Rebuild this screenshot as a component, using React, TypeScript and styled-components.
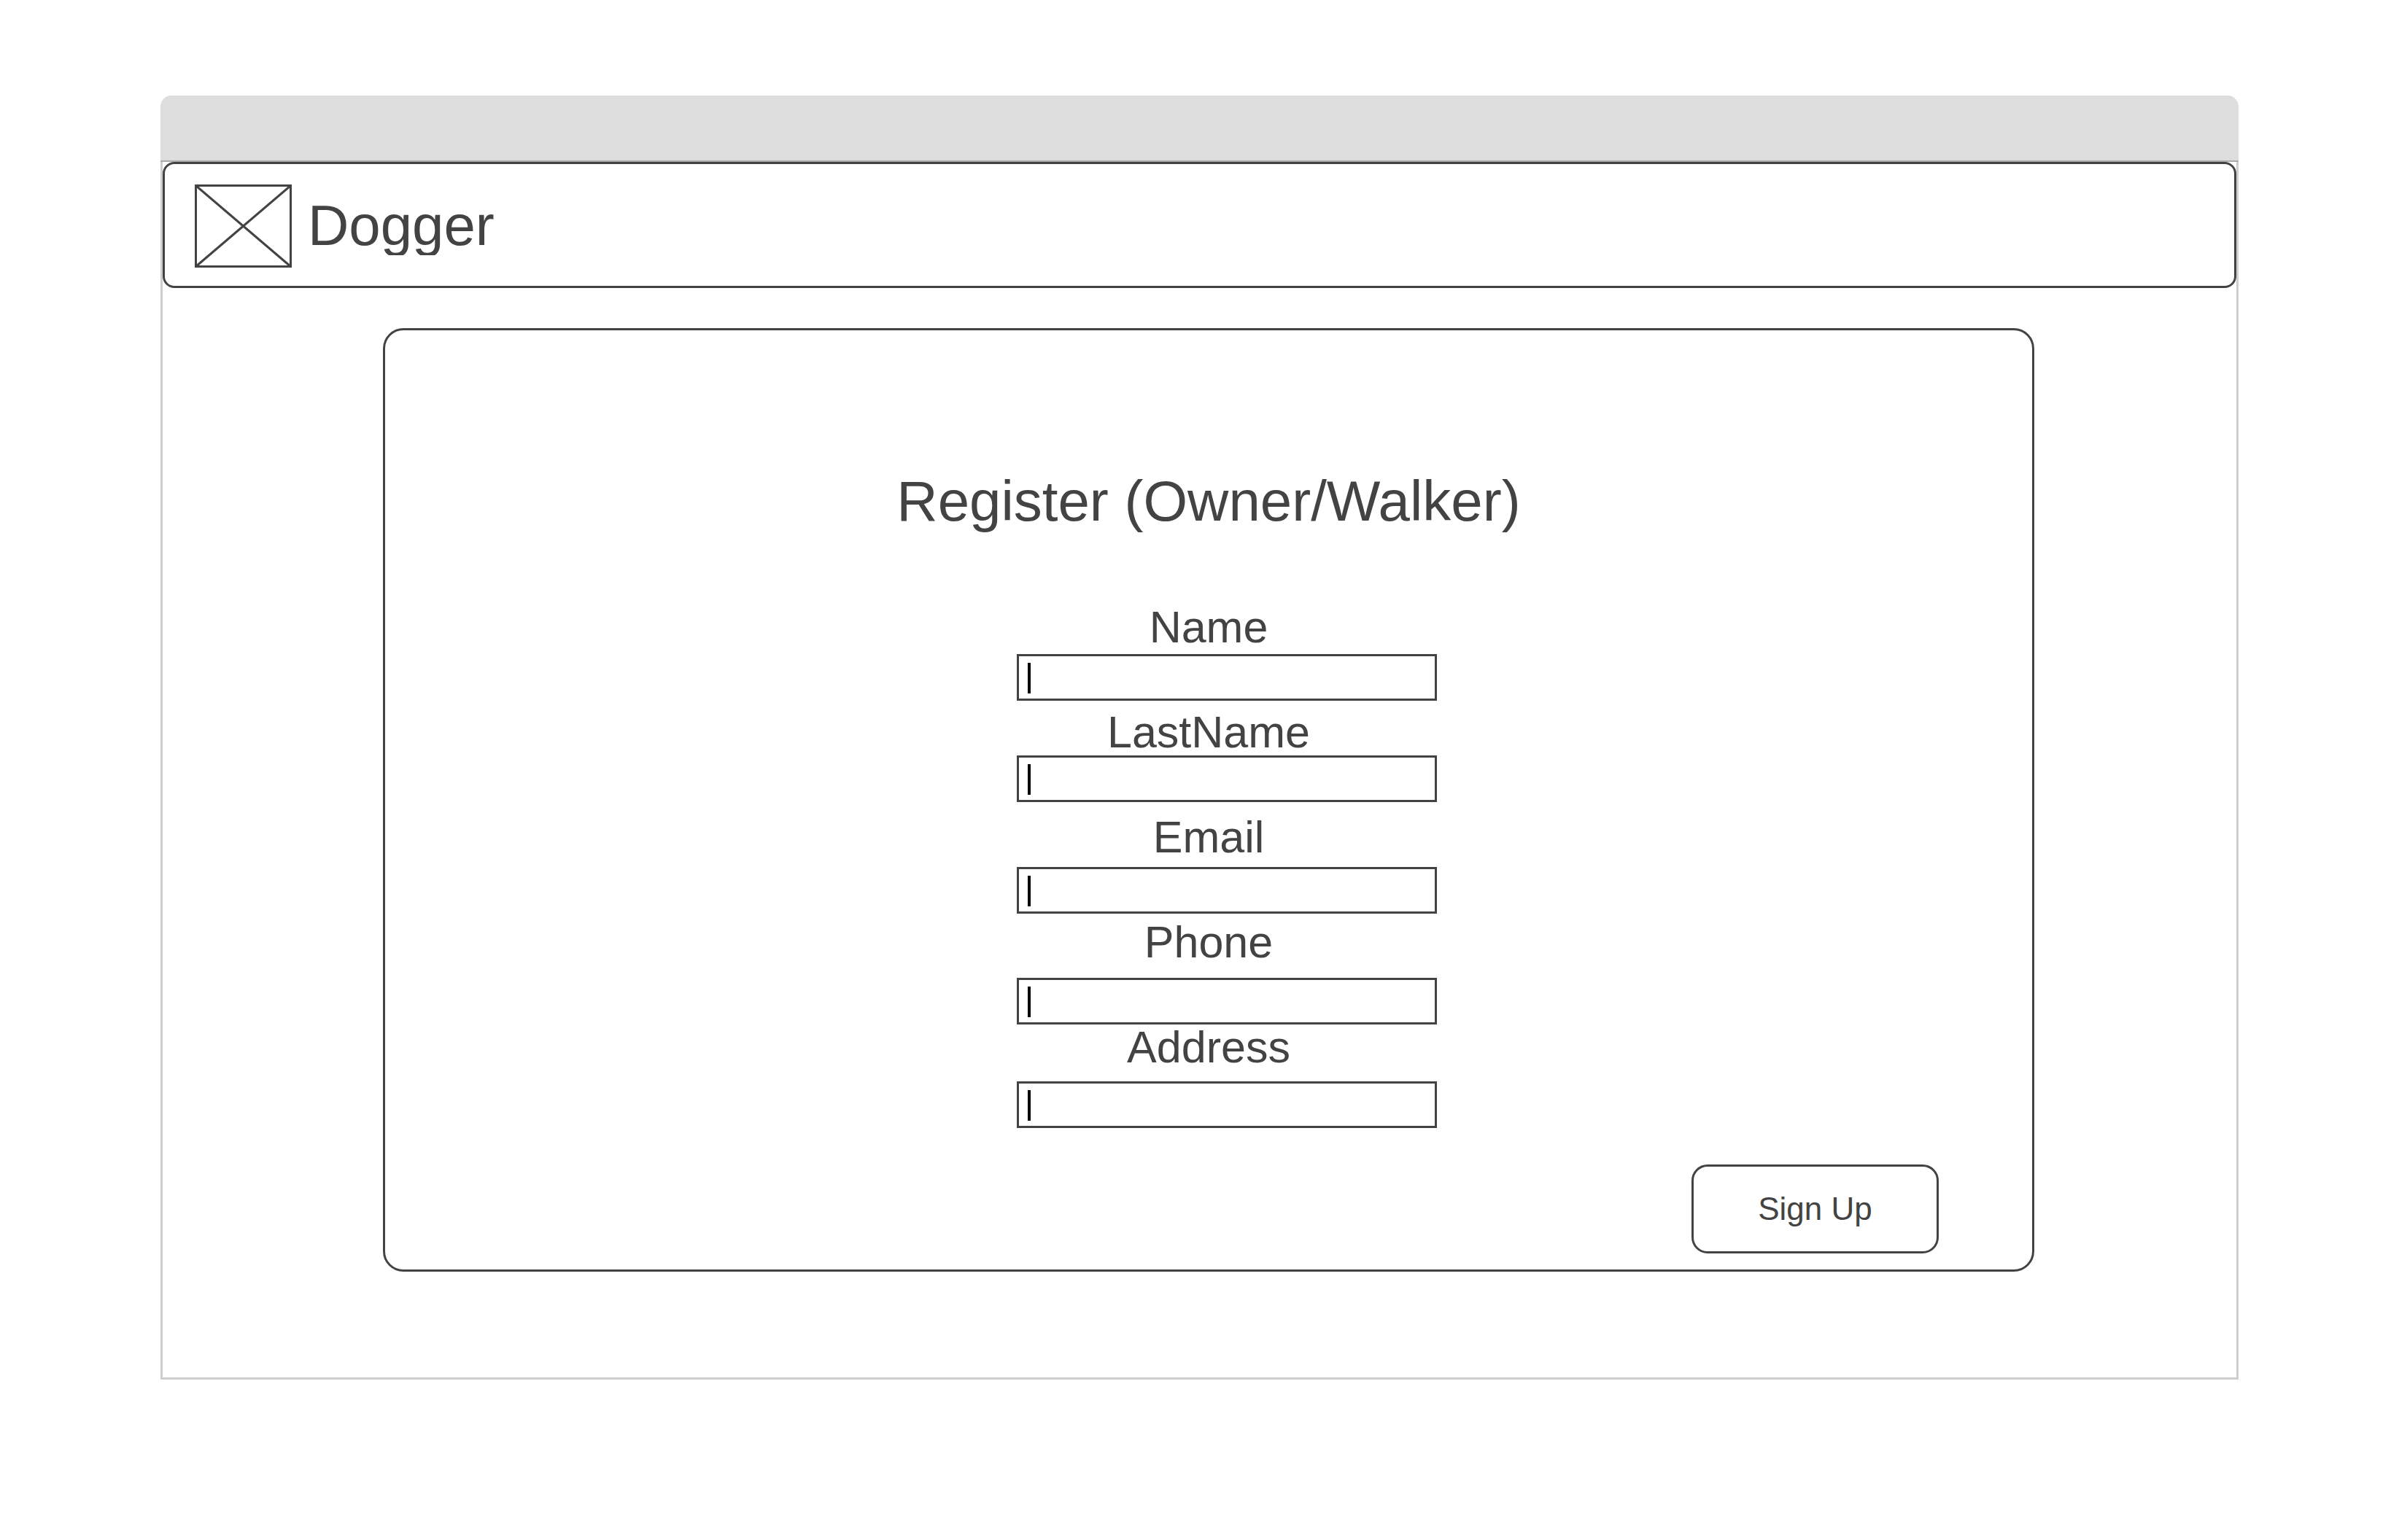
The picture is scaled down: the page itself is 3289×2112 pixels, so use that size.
import React from 'react';
import styled, { createGlobalStyle } from 'styled-components';

const ink = '#434343';

const GlobalStyle = createGlobalStyle`
  *, *::before, *::after {
    box-sizing: border-box;
  }
  body {
    margin: 0;
    background: #fff;
    color: ${ink};
    font-family: 'Liberation Sans', Arial, sans-serif;
  }
`;

const Page = styled.div`
  padding: 131px 220px 220px;
`;

const TitleBar = styled.div`
  height: 91px;
  background: #ddd;
  border-bottom: 2px solid #aaa;
  border-radius: 15px 15px 0 0;
`;

const WindowBody = styled.div`
  display: flex;
  flex-direction: column;
  gap: 55px;
  padding-bottom: 145px;
  border: 3px solid #cecece;
  border-top: none;
`;

const Header = styled.header`
  display: flex;
  align-items: center;
  gap: 22px;
  padding: 28px 41px 25px;
  border: 3px solid ${ink};
  border-radius: 16px;
`;

const Logo = styled.svg`
  flex: none;
  width: 133px;
  height: 114px;
  fill: none;
  stroke: ${ink};
  stroke-width: 3;
`;

const Brand = styled.div`
  height: 80px;
  font-size: 78px;
  line-height: 78px;
  overflow: hidden;
`;

const Panel = styled.main`
  margin: 0 277px 0 302px;
  padding: 189px 128px 22px;
  border: 3px solid ${ink};
  border-radius: 28px;
`;

const Form = styled.form`
  display: flex;
  flex-direction: column;
  align-items: center;
`;

const Title = styled.h1`
  margin: 0 0 97px;
  font-size: 78px;
  font-weight: 400;
  line-height: 90px;
`;

const Fields = styled.div`
  display: grid;
  grid-template-columns: minmax(0, 1fr);
  grid-auto-rows: 144px;
  width: 100%;
  max-width: 626px;
`;

const Field = styled.div<{ $gap: number }>`
  display: flex;
  flex-direction: column;
  gap: ${({ $gap }) => $gap}px;
`;

const Label = styled.label`
  font-size: 61px;
  line-height: 62px;
  text-align: center;
`;

const TextInput = styled.input`
  flex: none;
  min-width: 0;
  height: 64px;
  margin-left: 50px;
  padding: 0 24px;
  border: 3px solid ${ink};
  border-radius: 0;
  outline: none;
  background: linear-gradient(#000, #000) 12px 9px / 4px 42px no-repeat;
  color: ${ink};
  font: inherit;
  font-size: 44px;
`;

const SubmitButton = styled.button`
  align-self: flex-end;
  width: 339px;
  height: 122px;
  margin-top: 48px;
  padding: 0;
  border: 3px solid ${ink};
  border-radius: 22px;
  background: transparent;
  color: ${ink};
  font: inherit;
  font-size: 44px;
  cursor: pointer;
`;

const fields = [
  { id: 'name', label: 'Name', type: 'text', gap: 6 },
  { id: 'last-name', label: 'LastName', type: 'text', gap: 1 },
  { id: 'email', label: 'Email', type: 'email', gap: 10 },
  { id: 'phone', label: 'Phone', type: 'tel', gap: 18 },
  { id: 'address', label: 'Address', type: 'text', gap: 16 },
];

export default function App() {
  return (
    <>
      <GlobalStyle />
      <Page>
        <TitleBar />
        <WindowBody>
          <Header>
            <Logo viewBox="0 0 133 114" aria-hidden="true">
              <rect x="1.5" y="1.5" width="130" height="111" />
              <path d="M1.5 1.5 131.5 112.5M131.5 1.5 1.5 112.5" />
            </Logo>
            <Brand>Dogger</Brand>
          </Header>
          <Panel>
            <Form onSubmit={(event) => event.preventDefault()}>
              <Title>Register (Owner/Walker)</Title>
              <Fields>
                {fields.map(({ id, label, type, gap }) => (
                  <Field key={id} $gap={gap}>
                    <Label htmlFor={id}>{label}</Label>
                    <TextInput id={id} name={id} type={type} />
                  </Field>
                ))}
              </Fields>
              <SubmitButton type="submit">Sign Up</SubmitButton>
            </Form>
          </Panel>
        </WindowBody>
      </Page>
    </>
  );
}
